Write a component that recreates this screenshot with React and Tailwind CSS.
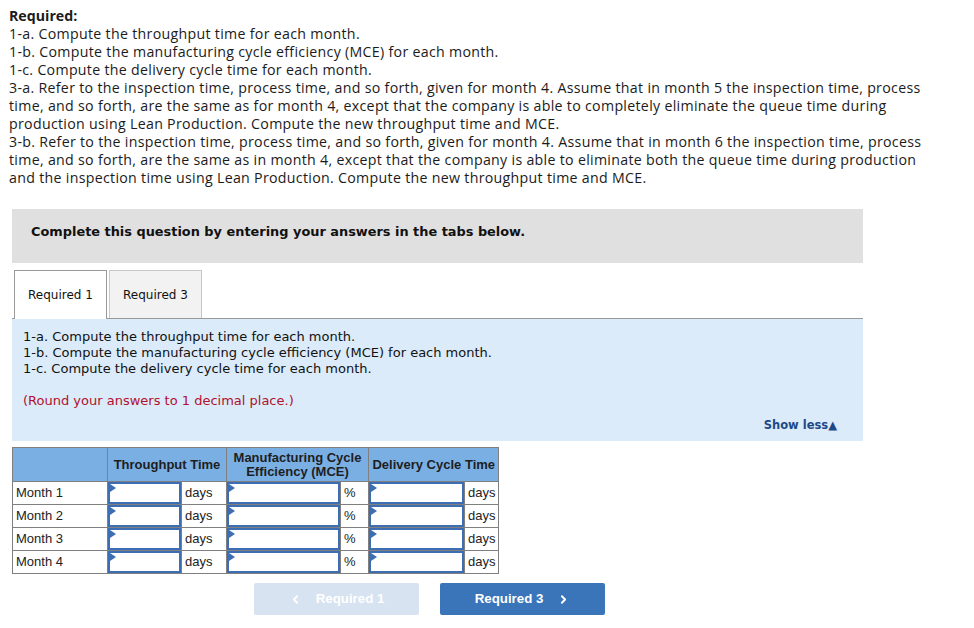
import React from 'react';
import { ChevronLeft, ChevronRight } from 'lucide-react';

const months = ['Month 1', 'Month 2', 'Month 3', 'Month 4'];

// input cell with the small blue marker in the corner
function AnswerCell({ width }) {
  return (
    <td className="border border-[#7f7f7f] p-0 align-top">
      <div className={`relative h-[22px] ${width} border-2 border-[#3d6eb4] bg-white`}>
        <span className="absolute left-0 top-0 h-0 w-0 border-t-[4px] border-b-[4px] border-l-[6px] border-t-transparent border-b-transparent border-l-[#3d6eb4]"></span>
      </div>
    </td>
  );
}

function UnitCell({ width, children }) {
  return (
    <td className={`${width} border border-[#7f7f7f] bg-white px-[3px] text-[13px] leading-[22px] text-[#222]`}>{children}</td>
  );
}

export default function App() {
  return (
    <div className="min-h-[628px] w-[974px] bg-white">
      <div className="w-[935px] px-[9px] pt-[7px] font-['Open_Sans',sans-serif] text-[14.2px] leading-[18px] tracking-[0.3px] text-[#1b1b1b]">
        <p className="font-bold tracking-normal">Required:</p>
        <p>1-a. Compute the throughput time for each month.</p>
        <p>1-b. Compute the manufacturing cycle efficiency (MCE) for each month.</p>
        <p>1-c. Compute the delivery cycle time for each month.</p>
        <p>
          3-a. Refer to the inspection time, process time, and so forth, given for month 4. Assume that in month 5 the inspection time, process
          time, and so forth, are the same as for month 4, except that the company is able to completely eliminate the queue time during
          production using Lean Production. Compute the new throughput time and MCE.
        </p>
        <p>
          3-b. Refer to the inspection time, process time, and so forth, given for month 4. Assume that in month 6 the inspection time, process
          time, and so forth, are the same as in month 4, except that the company is able to eliminate both the queue time during production
          and the inspection time using Lean Production. Compute the new throughput time and MCE.
        </p>
      </div>

      <div className="ml-[12px] mt-[22px] w-[851px]">
        <div className="h-[54px] bg-[#e0e0e0] px-[19px] pt-[13px] font-['DejaVu_Sans',Verdana,sans-serif] text-[12.9px] font-bold text-[#111]">
          Complete this question by entering your answers in the tabs below.
        </div>

        <div className="mt-[7px] flex gap-[2px] pl-[2px] font-['DejaVu_Sans',Verdana,sans-serif] text-[12px] text-[#111]">
          <div className="relative z-10 -mb-px flex h-[49px] w-[93px] items-center justify-center border border-b-0 border-[#999] bg-white">
            Required 1
          </div>
          <div className="flex h-[48px] w-[93px] items-center justify-center border border-b-0 border-[#c8c8c8] bg-[#f2f2f2]">
            Required 3
          </div>
        </div>

        <div className="relative h-[123px] border-t border-[#999] bg-[#dbebf9] px-[11px] pt-[10px] font-['DejaVu_Sans',Verdana,sans-serif] text-[13px] leading-[16px] text-[#111]">
          <p>1-a. Compute the throughput time for each month.</p>
          <p>1-b. Compute the manufacturing cycle efficiency (MCE) for each month.</p>
          <p>1-c. Compute the delivery cycle time for each month.</p>
          <p className="mt-[16px] text-[#b0112e]">(Round your answers to 1 decimal place.)</p>
          <div className="absolute bottom-[8px] right-[26px] text-[11.5px] font-bold text-[#1d4a87]">Show less▲</div>
        </div>

        <table className="mt-[6px] border-collapse font-['Liberation_Sans',Arial,sans-serif]">
          <thead>
            <tr className="h-[34px] bg-[#7aafe4] text-[13px] font-bold leading-[14px] text-[#1e1e1e]">
              <th className="w-[95px] border border-[#7f7f7f]"></th>
              <th colSpan={2} className="border border-[#7f7f7f] px-[4px] font-bold">Throughput Time</th>
              <th colSpan={2} className="border border-[#7f7f7f] px-[4px] font-bold">
                Manufacturing Cycle
                <br />
                Efficiency (MCE)
              </th>
              <th colSpan={2} className="border border-[#7f7f7f] px-[3px] font-bold">Delivery Cycle Time</th>
            </tr>
          </thead>
          <tbody>
            {months.map((m) => (
              <tr key={m} className="h-[23px]">
                <td className="border border-[#7f7f7f] bg-white px-[3px] text-[13px] text-[#222]">{m}</td>
                <AnswerCell width="w-[73px]" />
                <UnitCell width="w-[45px]">days</UnitCell>
                <AnswerCell width="w-[113px]" />
                <UnitCell width="w-[28px]">%</UnitCell>
                <AnswerCell width="w-[95px]" />
                <UnitCell width="w-[34px]">days</UnitCell>
              </tr>
            ))}
          </tbody>
        </table>

        <div className="mt-[9px] flex gap-[21px] pl-[242px] font-['Liberation_Sans',Arial,sans-serif] text-[13.3px] font-bold text-white">
          <button className="flex h-[32px] w-[165px] items-center justify-center gap-[14px] rounded-[2px] bg-[#d7e3f1]">
            <ChevronLeft size={13} strokeWidth={3.5} />
            <span>Required 1</span>
          </button>
          <button className="flex h-[32px] w-[165px] items-center justify-center gap-[14px] rounded-[2px] bg-[#3a75b9]">
            <span>Required 3</span>
            <ChevronRight size={13} strokeWidth={3.5} />
          </button>
        </div>
      </div>
    </div>
  );
}
